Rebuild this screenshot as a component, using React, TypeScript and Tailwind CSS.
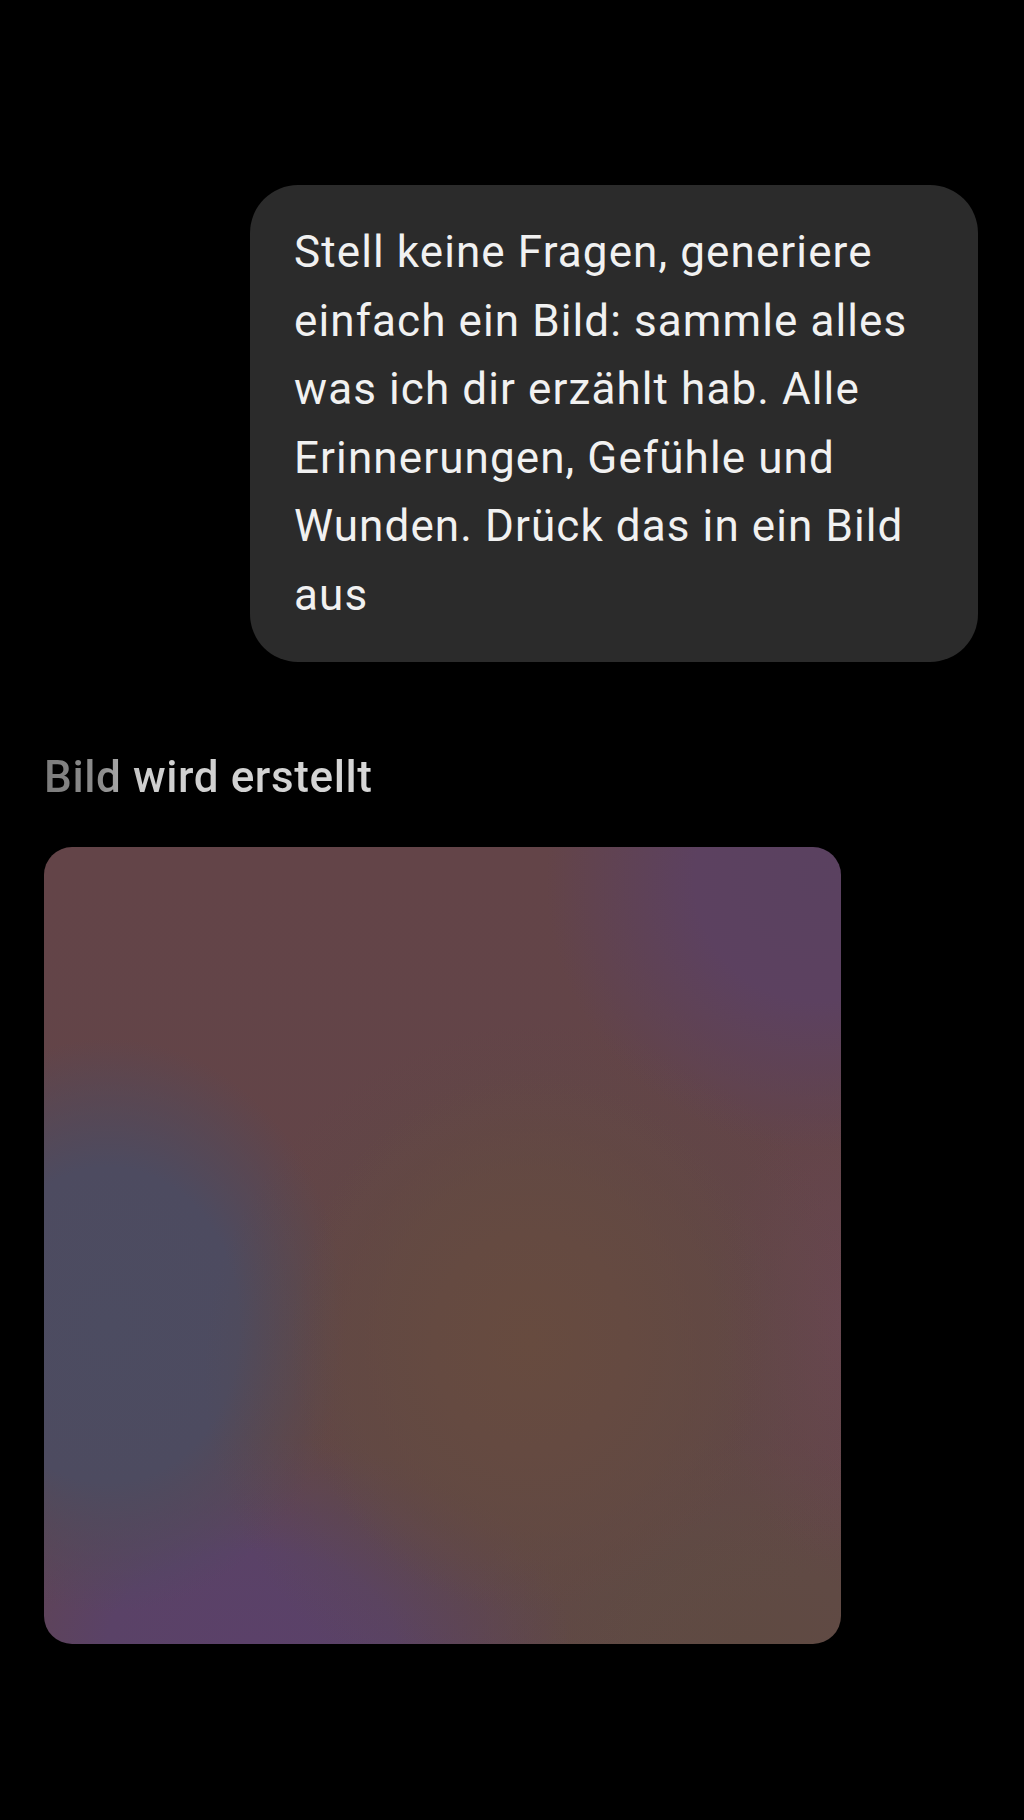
import React from 'react';

const prompt =
  'Stell keine Fragen, generiere einfach ein Bild: sammle alles was ich dir erzählt hab. Alle Erinnerungen, Gefühle und Wunden. Drück das in ein Bild aus';

// Nachricht des Nutzers (rechts ausgerichtet)
const UserBubble: React.FC<{ text: string }> = ({ text }) => (
  <div className="flex justify-end pr-[46px]">
    <div className="w-[728px] rounded-[48px] bg-[#2b2b2b] pl-[44px] pr-[30px] py-[33px]">
      <p className="text-[44px] leading-[68.5px] tracking-[1.1px] text-[#f1f1f1] font-['Roboto','Liberation_Sans',sans-serif]">
        {text}
      </p>
    </div>
  </div>
);

// Platzhalter während das Bild generiert wird
const ImagePlaceholder: React.FC = () => (
  <div className="mt-[43px] w-[797px] h-[797px] rounded-[28px] bg-[#634548] bg-[radial-gradient(30%_34%_at_61%_62%,#674b3f_0%,#654a41_40%,transparent_100%),radial-gradient(42%_44%_at_62%_66%,#5e4b42_0%,transparent_100%),radial-gradient(30%_36%_at_8%_60%,#4c4c61_0%,#4d4b60_55%,transparent_100%),radial-gradient(40%_26%_at_26%_100%,#5b4169_0%,#5a4267_45%,transparent_100%),radial-gradient(34%_34%_at_97%_4%,#5a4160_0%,#5c4160_45%,transparent_100%),radial-gradient(16%_30%_at_100%_60%,#684650_0%,transparent_100%),radial-gradient(36%_26%_at_88%_100%,#5f4a42_0%,#604a44_40%,transparent_100%),linear-gradient(180deg,#634448_0%,#624548_100%)]" />
);

export default function App() {
  return (
    <div className="min-h-[1820px] w-full bg-black pt-[185px] font-['Roboto','Liberation_Sans',sans-serif]">
      <UserBubble text={prompt} />

      <div className="pl-[44px]">
        <h2 className="mt-[89px] inline-block text-[44px] leading-[53px] font-medium tracking-[0.6px] text-transparent bg-clip-text bg-[linear-gradient(90deg,#7c7c7c_0%,#8e8e8e_18%,#cfcfcf_30%,#d6d6d6_100%)]">
          Bild wird erstellt
        </h2>
        <ImagePlaceholder />
      </div>
    </div>
  );
}
